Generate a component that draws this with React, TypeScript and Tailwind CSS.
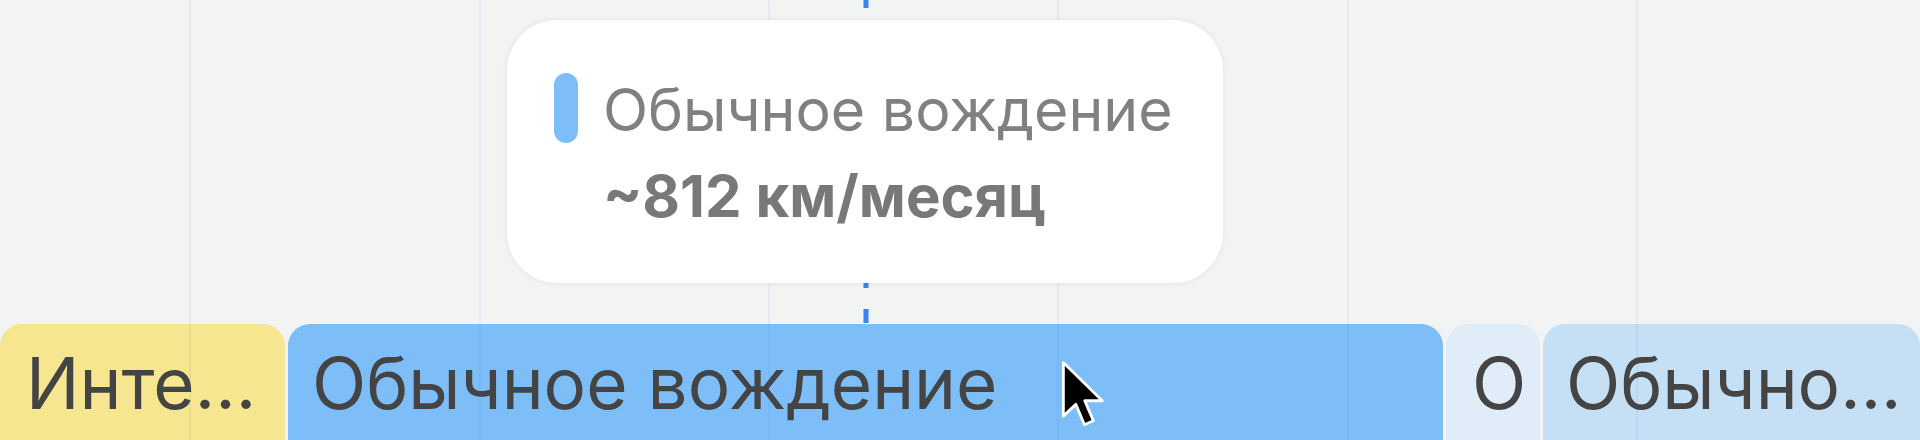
import React from 'react';

const gridLines = [190, 480, 769, 1058, 1348, 1637];

type Segment = {
  label: string;
  className: string;
};

const segments: Segment[] = [
  { label: 'Инте...', className: 'w-[285px] bg-[#f6e68f] pl-[26px]' },
  { label: 'Обычное вождение', className: 'w-[1155px] bg-[#7dbef9] pl-[24px]' },
  { label: 'О', className: 'w-[94px] bg-[#e0edf8] pl-[26px]' },
  { label: 'Обычно...', className: 'flex-1 bg-[#c5dff5] pl-[23px]' },
];

function Cursor() {
  return (
    <svg className="absolute left-[1058px] top-[358px] w-[50px] h-[72px]" viewBox="0 0 14 20">
      <path
        d="M1.5 1.2 L1.5 16.2 L5 12.9 L7.4 18.6 L9.9 17.5 L7.5 11.9 L12.4 11.9 Z"
        fill="#000"
        stroke="#fff"
        strokeWidth={0.8}
        strokeLinejoin="round"
      />
    </svg>
  );
}

export default function App() {
  return (
    <div
      className="relative w-[1920px] h-[440px] overflow-hidden bg-[#f2f3f3]"
      style={{ fontFamily: 'Inter, "Noto Sans", sans-serif' }}
    >
      {/* chart lane */}
      <div className="absolute left-0 right-0 top-[324px] flex gap-[3px]">
        {segments.map((s) => (
          <div
            key={s.label}
            className={`${s.className} h-[118px] rounded-t-[22px] flex items-center overflow-hidden whitespace-nowrap text-[71px] leading-none text-[#444444]`}
          >
            {s.label}
          </div>
        ))}
      </div>

      {/* grid */}
      {gridLines.map((x) => (
        <div
          key={x}
          className="absolute top-0 bottom-0 w-[2px] bg-[#3b5bdb]/[0.06] pointer-events-none"
          style={{ left: x - 1 }}
        />
      ))}

      {/* hover crosshair */}
      <svg className="absolute left-[862px] top-0 w-[8px] h-[324px]" viewBox="0 0 8 324">
        <line x1="4" y1="-11" x2="4" y2="324" stroke="#3b82f6" strokeWidth={5} strokeDasharray="14 21" strokeDashoffset={-5} />
      </svg>

      {/* tooltip */}
      <div className="absolute left-[507px] top-[20px] w-[716px] h-[263px] rounded-[50px] bg-white shadow-[0_0_6px_rgba(0,0,0,0.07)] pl-[47px] pt-[50px]">
        <div className="flex gap-[25px]">
          <div className="mt-[3px] w-[24px] h-[70px] rounded-full bg-[#7dbef9] shrink-0" />
          <div className="flex flex-col">
            <div className="text-[59px] leading-[80px] text-[#808080] whitespace-nowrap">Обычное вождение</div>
            <div className="mt-[6px] text-[58px] leading-[80px] font-bold text-[#787878] whitespace-nowrap">
              ~812 км/месяц
            </div>
          </div>
        </div>
      </div>

      <Cursor />
    </div>
  );
}
